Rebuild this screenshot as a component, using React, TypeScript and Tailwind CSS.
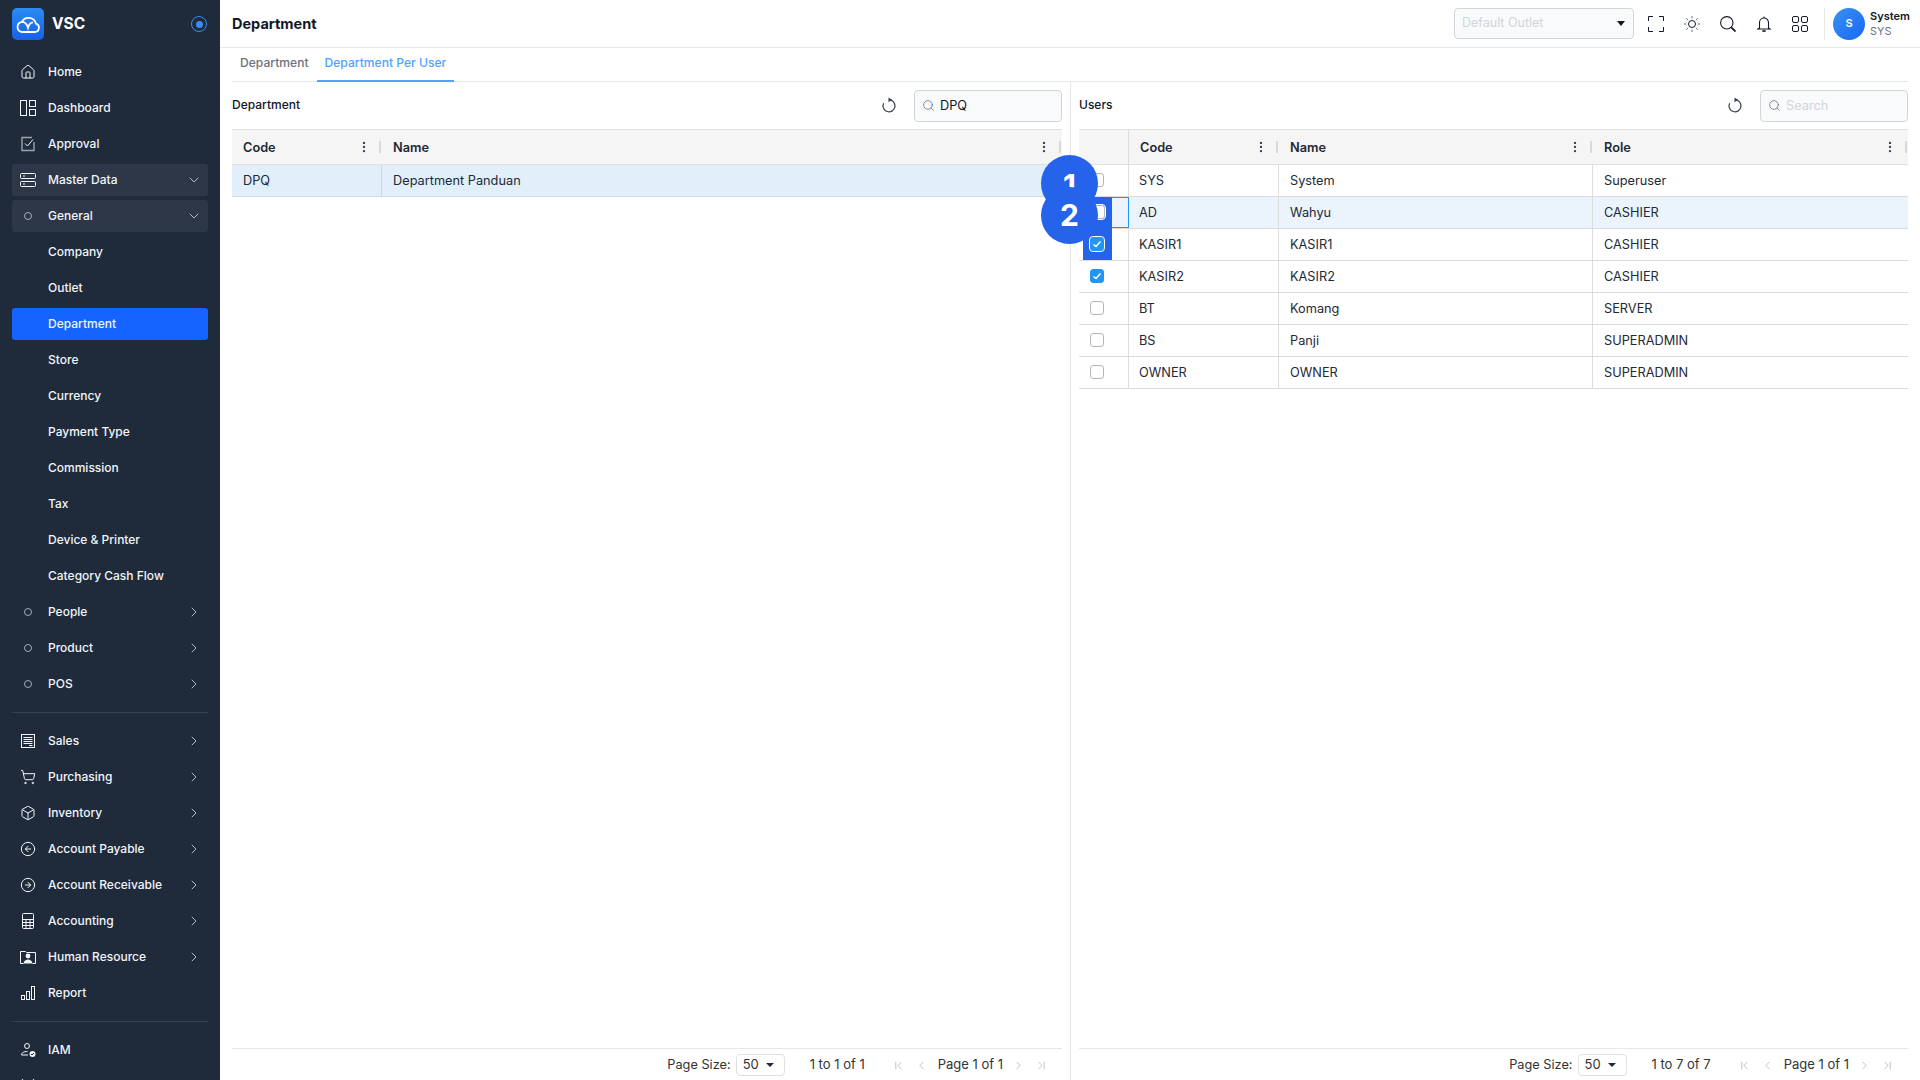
import {
  Box,
  ChevronDown,
  ChevronFirst,
  ChevronLast,
  ChevronLeft,
  ChevronRight,
  CircleArrowLeft,
  CircleArrowRight,
  EllipsisVertical,
  House,
  Search,
  ShoppingCart,
} from 'lucide-react';
import type { ReactNode } from 'react';

const Svg = ({ children }: { children: ReactNode }) => (
  <svg width="16" height="16" viewBox="0 0 16 16" fill="none" stroke="currentColor" strokeWidth="1">
    {children}
  </svg>
);

const DashboardIcon = () => (
  <Svg>
    <rect x="0.5" y="0.5" width="6" height="15" />
    <rect x="9.5" y="0.5" width="6" height="6" />
    <rect x="9.5" y="9.5" width="6" height="6" />
  </Svg>
);
const ApprovalIcon = () => (
  <Svg>
    <path d="M14 6v8.5H2v-13h10" stroke="#9ca3af" strokeWidth="1.4" />
    <path d="M5 7.5 7.5 10 13 3.5" strokeWidth="1" />
  </Svg>
);
const MasterIcon = () => (
  <Svg>
    <rect x="0.5" y="1.5" width="15" height="5" rx="1" />
    <rect x="0.5" y="9.5" width="15" height="5" rx="1" />
    <path d="M3 4h2M3 12h2" />
  </Svg>
);
const SalesIcon = () => (
  <Svg>
    <rect x="1.5" y="1.5" width="13" height="13" />
    <path d="M3.5 4.5h9M3.5 6.5h9M3.5 8.5h9M3.5 10.5h9M9 12.5h3.5" />
  </Svg>
);
const CalcIcon = () => (
  <Svg>
    <rect x="2.5" y="0.5" width="11" height="15" rx="1" />
    <path d="M2.5 6.5h11M2.5 9.5h11M2.5 12.5h11M6 6.5v9M10 6.5v9" />
  </Svg>
);
const HrIcon = () => (
  <Svg>
    <path d="M.5 14.5V2.5h5l1 1h9v11" />
    <circle cx="8" cy="7" r="2.400" fill="currentColor" stroke="none" />
    <path d="M3.500 14.500c.5-3 2.500-4 4.500-4s4 1 4.500 4z" fill="currentColor" stroke="none" />
    <path d="M.5 14.500h3M12.500 14.500h3" />
  </Svg>
);
const ReportIcon = () => (
  <Svg>
    <rect x="1.500" y="10.500" width="3" height="4" />
    <rect x="6.500" y="6.500" width="3" height="8" />
    <rect x="11.500" y="1.500" width="3" height="13" />
  </Svg>
);
const IamIcon = () => (
  <Svg>
    <circle cx="7" cy="4" r="2.500" />
    <path d="M1.500 13c0-2 2-3.500 6-3.500" />
    <path d="M1.500 13H8" />
    <circle cx="12.500" cy="12" r="3" fill="currentColor" stroke="none" />
    <path d="M11 12l1 1 2-2" stroke="#1f2a3a" />
  </Svg>
);
const ToolsIcon = () => (
  <Svg>
    <path d="M2 1l6 7 6-7" />
    <path d="M3 15l10-10" />
  </Svg>
);
const RefreshIcon = ({ className }: { className?: string }) => (
  <svg width="16" height="16" viewBox="0 0 16 16" fill="none" stroke="currentColor" strokeWidth="1.200" className={className}>
    <path d="M8 2.800a6 6 0 1 1-5.400 3.400" />
    <path d="M7.500 .4 11 2.800 7.500 5.200z" fill="currentColor" stroke="none" />
  </svg>
);
const SunIcon = () => (
  <svg width="16" height="16" viewBox="0 0 16 16" fill="none" stroke="currentColor" strokeWidth="1">
    <circle cx="8" cy="8" r="3.500" />
    <path d="M8 0v2.500M8 13.500V16M0 8h2.500M13.500 8H16M2.300 2.300l1.800 1.800M11.900 11.900l1.800 1.800M13.700 2.300l-1.800 1.800M4.100 11.900l-1.800 1.800" stroke="#6b7280" />
  </svg>
);
const FindIcon = () => (
  <svg width="16" height="16" viewBox="0 0 16 16" fill="none" stroke="currentColor" strokeWidth="1.100">
    <circle cx="6.800" cy="6.800" r="6.200" />
    <path d="M11.300 11.300 15.500 15.500" strokeWidth="1.800" />
  </svg>
);
const BellIcon = () => (
  <svg width="16" height="16" viewBox="0 0 16 16" fill="none" stroke="currentColor" strokeWidth="1.100">
    <path d="M8 .5v1.200M3.500 12V6.500a4.500 4.500 0 0 1 9 0V12l1.500 1H2z" />
    <path d="M6.300 15h3.400" strokeWidth="1.600" />
  </svg>
);
const Dot = () => <span className="mx-auto h-[8px] w-[8px] rounded-full border border-[#a3acb9]" />;

type NavProps = {
  label?: string;
  icon?: ReactNode;
  chevron?: 'down' | 'right';
  open?: boolean;
  active?: boolean;
};

const NavItem = ({ label, icon, chevron, open, active }: NavProps) => (
  <div
    className={`flex h-8 shrink-0 items-center gap-3 rounded-[3px] pl-2 pr-[6px] text-[12px] font-medium text-[#f1f5f9] ${
      active ? 'bg-[#1664ff]' : open ? 'bg-[#2d3748]' : ''
    }`}
  >
    <span className="flex w-4 shrink-0 items-center">{icon}</span>
    <span className="flex-1 truncate">{label}</span>
    {chevron === 'down' && <ChevronDown size={16} strokeWidth={1.25} className="text-[#cbd5e1]" />}
    {chevron === 'right' && <ChevronRight size={16} strokeWidth={1.25} className="text-[#cbd5e1]" />}
  </div>
);

const Sidebar = () => (
  <aside className="flex h-full w-[220px] shrink-0 flex-col overflow-hidden bg-[#1f2a3a] px-3">
    <div className="flex h-12 shrink-0 items-center">
      <div className="flex h-8 w-8 items-center justify-center rounded-[5px] bg-gradient-to-b from-[#2a8cf5] to-[#1a5fe8]">
        <svg width="24" height="17" viewBox="0 0 24 17" fill="none" stroke="white" strokeWidth="1.800">
          <path d="M5.500 16h13a4.300 4.300 0 0 0 1.400-8.400A7.500 7.500 0 0 0 6 5.800 5.200 5.200 0 0 0 5.500 16z" />
          <path d="M6 5.800c3 0 5 2.500 6 6 .8-3 2.500-5.500 5-5.500" />
        </svg>
      </div>
      <span className="ml-2 flex-1 text-[15.500px] font-bold text-white">VSC</span>
      <span className="mr-[1px] flex h-4 w-4 items-center justify-center rounded-full border border-[#3b8bf0]">
        <span className="h-[7px] w-[7px] rounded-full bg-[#3b8bf0]" />
      </span>
    </div>
    <div className="mt-2 flex shrink-0 flex-col gap-1">
      <NavItem label="Home" icon={<House size={16} strokeWidth={1.5} />} />
      <NavItem label="Dashboard" icon={<DashboardIcon />} />
      <NavItem label="Approval" icon={<ApprovalIcon />} />
      <NavItem label="Master Data" icon={<MasterIcon />} chevron="down" open />
      <NavItem label="General" icon={<Dot />} chevron="down" open />
      <NavItem label="Company" />
      <NavItem label="Outlet" />
      <NavItem label="Department" active />
      <NavItem label="Store" />
      <NavItem label="Currency" />
      <NavItem label="Payment Type" />
      <NavItem label="Commission" />
      <NavItem label="Tax" />
      <NavItem label="Device & Printer" />
      <NavItem label="Category Cash Flow" />
      <NavItem label="People" icon={<Dot />} chevron="right" />
      <NavItem label="Product" icon={<Dot />} chevron="right" />
      <NavItem label="POS" icon={<Dot />} chevron="right" />
    </div>
    <div className="my-3 h-px shrink-0 bg-[#374151]" />
    <div className="flex shrink-0 flex-col gap-1">
      <NavItem label="Sales" icon={<SalesIcon />} chevron="right" />
      <NavItem label="Purchasing" icon={<ShoppingCart size={16} strokeWidth={1.5} />} chevron="right" />
      <NavItem label="Inventory" icon={<Box size={16} strokeWidth={1.5} />} chevron="right" />
      <NavItem label="Account Payable" icon={<CircleArrowLeft size={16} strokeWidth={1.5} />} chevron="right" />
      <NavItem label="Account Receivable" icon={<CircleArrowRight size={16} strokeWidth={1.5} />} chevron="right" />
      <NavItem label="Accounting" icon={<CalcIcon />} chevron="right" />
      <NavItem label="Human Resource" icon={<HrIcon />} chevron="right" />
      <NavItem label="Report" icon={<ReportIcon />} />
    </div>
    <div className="my-3 h-px shrink-0 bg-[#374151]" />
    <div className="flex shrink-0 flex-col gap-1">
      <NavItem label="IAM" icon={<IamIcon />} />
      <NavItem icon={<ToolsIcon />} />
    </div>
  </aside>
);

const TopBar = () => (
  <header className="flex h-12 shrink-0 items-center border-b border-[#e5e7eb] pl-3 pr-3">
    <h1 className="flex-1 pt-[1px] text-[14.500px] font-bold text-[#111827]">Department</h1>
    <div className="flex h-[31px] w-[180px] items-center rounded-[4px] border border-[#d1d5db] bg-[#f8fafc] px-[7px] pb-[1px] text-[12.500px] text-[#d1d5db]">
      <span className="flex-1">Default Outlet</span>
      <span className="mr-[1px] h-0 w-0 border-x-[4px] border-t-[5px] border-x-transparent border-t-[#111827]" />
    </div>
    <div className="ml-[14px] flex items-center gap-5 text-[#111827]">
      <svg width="16" height="16" viewBox="0 0 16 16" fill="none" stroke="currentColor" strokeWidth="1">
        <path d="M.5 5V.5H5M11 .5h4.500V5M15.500 11v4.500H11M5 15.500H.5V11" />
      </svg>
      <SunIcon />
      <FindIcon />
      <BellIcon />
      <svg width="16" height="16" viewBox="0 0 16 16" fill="none" stroke="currentColor" strokeWidth="1">
        <rect x="0.500" y="0.500" width="6" height="6" rx="1.500" />
        <rect x="9.500" y="0.500" width="6" height="6" rx="1.500" />
        <rect x="0.500" y="9.500" width="6" height="6" rx="1.500" />
        <rect x="9.500" y="9.500" width="6" height="6" rx="1.500" />
      </svg>
    </div>
    <div className="ml-[16px] mr-[8px] h-8 w-px bg-[#e5e7eb]" />
    <div className="flex h-8 w-8 items-center justify-center rounded-full bg-gradient-to-br from-[#3b90f0] to-[#1a66f5] text-[11px] font-semibold text-white">
      S
    </div>
    <div className="ml-[5px] flex w-[38px] flex-col text-[11px] leading-[15px]">
      <span className="font-semibold text-[#111827]">System</span>
      <span className="text-[#6b7280]">SYS</span>
    </div>
  </header>
);

const Tabs = () => (
  <div className="flex h-[34px] shrink-0 items-stretch border-b border-[#e5e7eb] text-[12.100px] font-medium">
    <div className="flex items-center px-2 pb-[3px] text-[#6b7280]">Department</div>
    <div className="-mb-px flex items-center border-b-2 border-[#4da3ff] px-2 pb-[2px] text-[#4da3ff]">
      Department Per User
    </div>
  </div>
);

const PanelHead = ({ title, query }: { title: string; query?: string }) => (
  <div className="flex h-[47px] shrink-0 items-center">
    <span className="flex-1 pb-[2px] text-[12px] font-medium text-[#111827]">{title}</span>
    <RefreshIcon className="mb-[2px] mr-[17px] text-[#374151]" />
    <div className="flex h-[32px] w-[148px] items-center gap-[5px] rounded-[4px] border border-[#d1d5db] bg-[#f8fafc] px-[7px] text-[12.750px]">
      <Search size={13} strokeWidth={1.5} className="text-[#6b7280]" />
      {query ? <span className="text-[#111827]">{query}</span> : <span className="text-[#d1d5db]">Search</span>}
    </div>
  </div>
);

const HeadCell = ({ label }: { label: string }) => (
  <div className="flex items-center pl-[11px] font-semibold text-[#1f2937]">
    <span className="flex-1 pt-[1px]">{label}</span>
    <EllipsisVertical size={14} strokeWidth={2} className="mr-[8px] text-[#374151]" />
    <span className="mr-[1px] h-[12px] w-[2px] bg-[#d9d9d9]" />
  </div>
);

const Check = ({ on, ring }: { on?: boolean; ring?: boolean }) => (
  <span
    className={`relative z-20 flex h-[14px] w-[14px] items-center justify-center rounded-[3px] border ${
      on ? 'border-[#2196f3] bg-[#2196f3]' : 'border-[#b5b5b5] bg-white'
    } ${ring ? 'outline outline-1 outline-white' : ''}`}
  >
    {on && (
      <svg width="10" height="10" viewBox="0 0 10 10" fill="none" stroke="white" strokeWidth="1.500">
        <path d="M1.500 5.500 4 7.500 8.500 2.500" />
      </svg>
    )}
  </span>
);

const Pager = ({ range }: { range: string }) => (
  <div className="flex h-[32px] shrink-0 items-center justify-end border-t border-[#e5e7eb] pr-[14px] pt-[1px] text-[13px] text-[#333333]">
    <span className="text-[12.750px]">Page Size:</span>
    <div className="ml-[5px] flex h-[22px] w-[49px] items-center rounded-[4px] border border-[#e0e0e0] px-[6px]">
      <span className="flex-1">50</span>
      <span className="mr-[4px] h-0 w-0 border-x-[4px] border-t-[4px] border-x-transparent border-t-[#1f2937]" />
    </div>
    <span className="ml-[25px] whitespace-nowrap">{range}</span>
    <ChevronFirst size={13} strokeWidth={1.25} className="ml-[27px] text-[#9ca3af]" />
    <ChevronLeft size={13} strokeWidth={1.25} className="ml-[10px] text-[#9ca3af]" />
    <span className="ml-[10px] whitespace-nowrap">Page 1 of 1</span>
    <ChevronRight size={13} strokeWidth={1.25} className="ml-[9px] text-[#9ca3af]" />
    <ChevronLast size={13} strokeWidth={1.25} className="ml-[10px] text-[#9ca3af]" />
  </div>
);

const users = [
  { code: 'SYS', name: 'System', role: 'Superuser' },
  { code: 'AD', name: 'Wahyu', role: 'CASHIER', hover: true, ring: true },
  { code: 'KASIR1', name: 'KASIR1', role: 'CASHIER', on: true, ring: true },
  { code: 'KASIR2', name: 'KASIR2', role: 'CASHIER', on: true },
  { code: 'BT', name: 'Komang', role: 'SERVER' },
  { code: 'BS', name: 'Panji', role: 'SUPERADMIN' },
  { code: 'OWNER', name: 'OWNER', role: 'SUPERADMIN' },
];

const DepartmentPanel = () => (
  <section className="flex w-[830px] shrink-0 flex-col">
    <PanelHead title="Department" query="DPQ" />
    <div className="flex-1 text-[12.750px] text-[#1f2937]">
      <div className="grid h-[36px] grid-cols-[150px_1fr] border-y border-[#e0e0e0] bg-[#f5f5f5]">
        <HeadCell label="Code" />
        <HeadCell label="Name" />
      </div>
      <div className="grid h-[32px] grid-cols-[150px_1fr] border-b border-[#d5dde5] bg-[#e1effb]">
        <div className="flex items-center border-r border-[#c9d6e2] pl-[11px]">DPQ</div>
        <div className="flex items-center pl-[11px]">Department Panduan</div>
      </div>
    </div>
    <Pager range="1 to 1 of 1" />
  </section>
);

const UsersPanel = () => (
  <section className="flex min-w-0 flex-1 flex-col">
    <PanelHead title="Users" />
    <div className="flex-1 text-[12.750px] text-[#1f2937]">
      <div className="grid h-[36px] grid-cols-[50px_150px_314px_1fr] border-y border-[#e0e0e0] bg-[#f5f5f5]">
        <div className="border-r border-[#dcdcdc]" />
        <HeadCell label="Code" />
        <HeadCell label="Name" />
        <HeadCell label="Role" />
      </div>
      {users.map((u) => (
        <div
          key={u.code}
          className={`grid h-[32px] grid-cols-[50px_150px_314px_1fr] border-b border-[#dddddd] ${
            u.hover ? 'bg-[#ebf4fd]' : 'bg-white'
          }`}
        >
          <div
            className={`flex items-center pb-[1px] pl-[11px] ${
              u.hover ? 'border border-[#2196f3]' : 'border-r border-[#dddddd]'
            }`}
          >
            <Check on={u.on} ring={u.ring} />
          </div>
          <div className="flex items-center border-r border-[#dddddd] pl-[10px]">{u.code}</div>
          <div className="flex items-center border-r border-[#dddddd] pl-[11px]">{u.name}</div>
          <div className="flex items-center pl-[11px]">{u.role}</div>
        </div>
      ))}
    </div>
    <Pager range="1 to 7 of 7" />
  </section>
);

const App = () => {
  return (
    <div className="relative flex h-screen w-full overflow-hidden bg-white font-['Inter',sans-serif]">
      <Sidebar />
      <main className="flex min-w-0 flex-1 flex-col">
        <TopBar />
        <div className="flex min-h-0 flex-1 flex-col px-3">
          <Tabs />
          <div className="flex min-h-0 flex-1">
            <DepartmentPanel />
            <div className="mx-2 w-px shrink-0 bg-[#e5e7eb]" />
            <UsersPanel />
          </div>
        </div>
      </main>

      {/* tutorial markers over the users grid */}
      <div className="absolute left-[1083px] top-[197px] z-10 h-[63px] w-[29px] bg-[#2563eb]" />
      <div className="absolute left-[1041px] top-[155px] z-30 flex h-[57px] w-[57px] items-center justify-center rounded-full bg-[#2563eb] pt-1 text-[30px] font-bold text-white">
        1
      </div>
      <div className="absolute left-[1041px] top-[187px] z-30 flex h-[57px] w-[57px] items-center justify-center rounded-full bg-[#2563eb] text-[30px] font-bold text-white">
        2
      </div>
    </div>
  );
};

export default App;
